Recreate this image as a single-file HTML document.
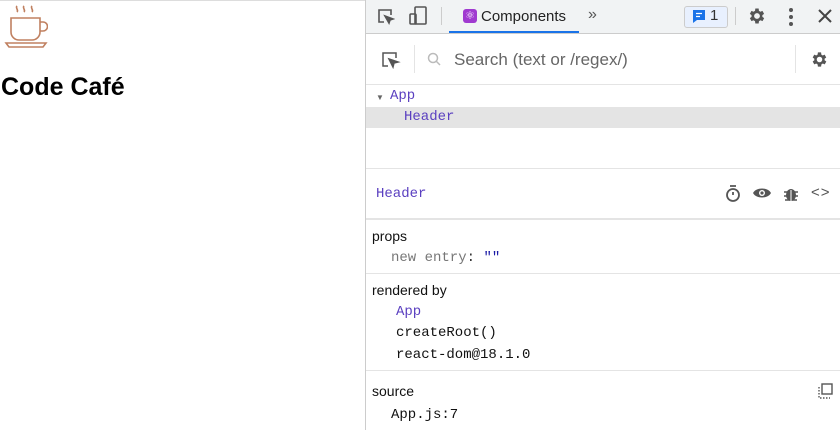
<!DOCTYPE html>
<html><head><style>
body{margin:0;width:840px;height:430px;position:relative;overflow:hidden;background:#fff;font-family:"Liberation Sans",sans-serif}
.a{position:absolute}
.mono{font-family:"Liberation Mono",monospace}
.hr{position:absolute;left:366px;right:0;height:1px;background:#e4e4e4}
</style></head><body>
<div class="a" style="left:0;top:0;width:365px;height:1px;background:#ddd"></div>
<svg class="a" style="left:4px;top:3px" width="44" height="46" viewBox="0 0 44 46" fill="none" stroke="#c08060" stroke-width="1.6">
<path d="M13 3c-2 2 2 4 0 6M20 3c-2 2 2 4 0 6M28 3c-2 2 2 4 0 6"/>
<path d="M7 15h29v14a8 8 0 0 1-8 8H15a8 8 0 0 1-8-8z"/>
<path d="M36 19h3a4 4 0 0 1 0 9h-3"/>
<path d="M2 40h40l-3 4H5z"/>
</svg>
<div class="a" style="left:1px;top:73px;font-size:25px;font-weight:bold;color:#000">Code Café</div>
<div class="a" style="left:365px;top:0;width:1px;height:430px;background:#ccc"></div>
<div class="a" style="left:366px;top:0;right:0;height:33px;background:#f1f3f4;border-bottom:1px solid #ccc"></div>
<svg class="a" style="left:377px;top:8px" width="18" height="18" fill="none" stroke="#555" stroke-width="1.6"><path d="M7 14H2V2h12v5"/><path d="M8 8l8 3-3 1-1 3z" fill="#555"/></svg>
<svg class="a" style="left:408px;top:6px" width="20" height="20" fill="none" stroke="#555" stroke-width="1.6"><rect x="7" y="1" width="11" height="17" rx="1"/><rect x="2" y="8" width="6" height="10" rx="1"/></svg>
<div class="a" style="left:441px;top:7px;width:1px;height:18px;background:#ccc"></div>
<div class="a" style="left:463px;top:9px;width:14px;height:14px;border-radius:3px;background:#a03ad0;color:#fff;font-size:11px;text-align:center;line-height:14px">⚛</div>
<div class="a" style="left:481px;top:8px;font-size:15px;color:#222">Components</div>
<div class="a" style="left:449px;top:31px;width:130px;height:2px;background:#1a73e8"></div>
<div class="a" style="left:588px;top:6px;font-size:16px;color:#555">»</div>
<div class="a" style="left:684px;top:6px;width:42px;height:20px;border:1px solid #ccc;border-radius:3px;background:#e8f0fe"></div>
<svg class="a" style="left:692px;top:9px" width="14" height="15"><path d="M1 1h12v10H5l-4 3z" fill="#1a73e8"/><path d="M4 4.5h6M4 7.5h4" stroke="#fff" stroke-width="1.3"/></svg>
<div class="a" style="left:710px;top:7px;font-size:15px;color:#333">1</div>
<div class="a" style="left:735px;top:7px;width:1px;height:18px;background:#ccc"></div>
<svg class="a" style="left:747px;top:6px" width="20" height="20" viewBox="0 0 24 24"><path fill="#555" d="M19.4 13a7.5 7.5 0 0 0 0-2l2.1-1.6-2-3.5-2.5 1a7 7 0 0 0-1.7-1L15 3h-4l-.4 2.9a7 7 0 0 0-1.7 1l-2.5-1-2 3.5L6.5 11a7.5 7.5 0 0 0 0 2l-2.1 1.6 2 3.5 2.5-1a7 7 0 0 0 1.7 1L11 21h4l.4-2.9a7 7 0 0 0 1.7-1l2.5 1 2-3.5zM13 15.5a3.5 3.5 0 1 1 0-7 3.5 3.5 0 0 1 0 7z" transform="translate(-1 0)"/></svg>
<svg class="a" style="left:787px;top:7px" width="8" height="20"><circle cx="4" cy="3" r="2" fill="#555"/><circle cx="4" cy="10" r="2" fill="#555"/><circle cx="4" cy="17" r="2" fill="#555"/></svg>
<svg class="a" style="left:818px;top:9px" width="14" height="14" stroke="#444" stroke-width="2"><path d="M1 1l12 12M13 1L1 13"/></svg>
<svg class="a" style="left:381px;top:51px" width="20" height="18" fill="none" stroke="#555" stroke-width="1.5"><path d="M7 15H2V2h13v5"/><path d="M8 8l9 3-4 1-1 4z" fill="#555"/></svg>
<div class="a" style="left:414px;top:45px;width:1px;height:28px;background:#e4e4e4"></div>
<svg class="a" style="left:427px;top:52px" width="14" height="14" fill="none" stroke="#bbb" stroke-width="1.5"><circle cx="6" cy="6" r="4.5"/><path d="M9 9l4 4"/></svg>
<div class="a" style="left:454px;top:50px;font-size:17px;color:#666">Search (text or /regex/)</div>
<div class="a" style="left:795px;top:45px;width:1px;height:28px;background:#e4e4e4"></div>
<svg class="a" style="left:810px;top:50px" width="19" height="19" viewBox="0 0 24 24"><path fill="#555" d="M19.4 13a7.5 7.5 0 0 0 0-2l2.1-1.6-2-3.5-2.5 1a7 7 0 0 0-1.7-1L15 3h-4l-.4 2.9a7 7 0 0 0-1.7 1l-2.5-1-2 3.5L6.5 11a7.5 7.5 0 0 0 0 2l-2.1 1.6 2 3.5 2.5-1a7 7 0 0 0 1.7 1L11 21h4l.4-2.9a7 7 0 0 0 1.7-1l2.5 1 2-3.5zM13 15.5a3.5 3.5 0 1 1 0-7 3.5 3.5 0 0 1 0 7z" transform="translate(-1 0)"/></svg>
<div class="hr" style="top:84px"></div>
<div class="a" style="left:376px;top:93px;font-size:8px;color:#666">▼</div>
<div class="a mono" style="left:390px;top:88px;font-size:14px;color:#5a3fc0">App</div>
<div class="a" style="left:366px;top:107px;right:0;height:21px;background:#e4e4e4"></div>
<div class="a mono" style="left:404px;top:109px;font-size:14px;color:#5a3fc0">Header</div>
<div class="hr" style="top:168px"></div>
<div class="a mono" style="left:376px;top:186px;font-size:14px;color:#5a3fc0">Header</div>
<svg class="a" style="left:725px;top:184px" width="17" height="19" fill="none" stroke="#555" stroke-width="1.8"><circle cx="8" cy="11" r="6"/><path d="M5 2h6M8 8v3"/></svg>
<svg class="a" style="left:752px;top:186px" width="20" height="14"><path d="M1 7C4 1 16 1 19 7 16 13 4 13 1 7z" fill="#555"/><circle cx="10" cy="7" r="3" fill="#fff"/><circle cx="10" cy="7" r="1.6" fill="#555"/></svg>
<svg class="a" style="left:783px;top:185px" width="16" height="17" fill="#555"><ellipse cx="8" cy="10" rx="5" ry="6"/><path d="M1 7h14M1 11h14M2 15h12" stroke="#555" stroke-width="1.6"/><path d="M8 5v11" stroke="#fff" stroke-width="1"/></svg>
<div class="a" style="left:811px;top:184px;font-size:15px;color:#555;letter-spacing:1px">&lt;&gt;</div>
<div class="hr" style="top:218px;height:2px"></div>
<div class="a" style="left:372px;top:228px;font-size:14px;color:#111">props</div>
<div class="a mono" style="left:391px;top:250px;font-size:14px;color:#777">new entry<span style="color:#333">:</span> <span style="color:#1a1aa6">""</span></div>
<div class="hr" style="top:273px"></div>
<div class="a" style="left:372px;top:282px;font-size:14px;color:#111">rendered by</div>
<div class="a mono" style="left:396px;top:304px;font-size:14px;color:#5a3fc0">App</div>
<div class="a mono" style="left:396px;top:325px;font-size:14px;color:#111">createRoot()</div>
<div class="a mono" style="left:396px;top:347px;font-size:14px;color:#111">react-dom@18.1.0</div>
<div class="hr" style="top:370px"></div>
<div class="a" style="left:372px;top:383px;font-size:14px;color:#111">source</div>
<svg class="a" style="left:817px;top:383px" width="16" height="16" fill="none" stroke="#555" stroke-width="1.4"><rect x="5" y="1" width="10" height="10"/><path d="M2 4v11h11" stroke-dasharray="1.5 1.5"/></svg>
<div class="a mono" style="left:391px;top:407px;font-size:14px;color:#111">App.js:7</div>
</body></html>
